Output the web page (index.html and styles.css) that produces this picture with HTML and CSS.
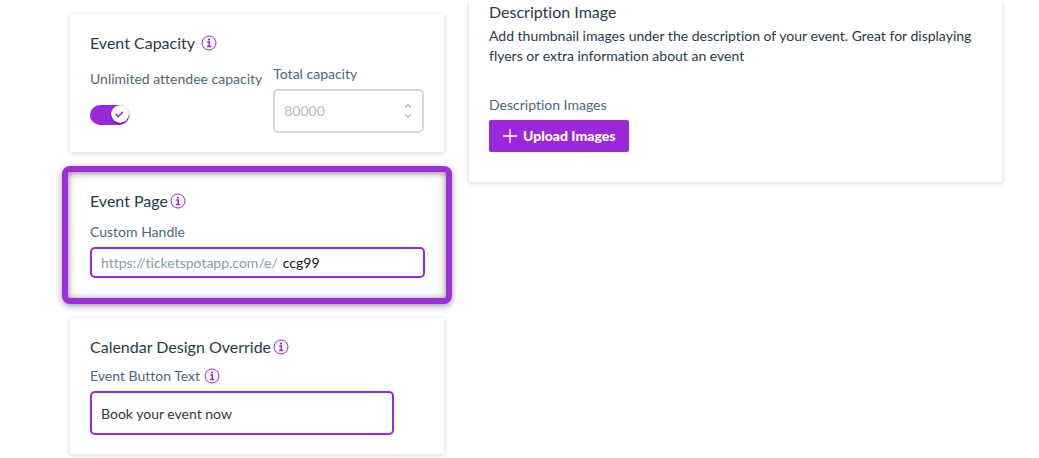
FILE: index.html
```html
<!DOCTYPE html>
<html lang="en">
<head>
  <meta charset="UTF-8" />
  <meta name="viewport" content="width=device-width, initial-scale=1.0" />
  <title>Event settings</title>
  <link rel="stylesheet" href="styles.css">
</head>
<body>
  <svg class="sprite" aria-hidden="true">
    <symbol id="icon-info" viewBox="0 0 16 16">
      <circle cx="8" cy="8" r="7" fill="none" stroke="currentColor" />
      <circle cx="8" cy="4.6" r="1.1" fill="currentColor" />
      <path d="M6.2 7.1H8.3V11.2M6 11.4H10.2" fill="none" stroke="currentColor" stroke-width="1.5" />
    </symbol>
  </svg>

  <main class="page">
    <div class="column">
      <section class="card capacity">
        <h2>Event Capacity <svg class="info spaced"><use href="#icon-info" /></svg></h2>
        <div class="capacity-row">
          <div class="unlimited">
            <label for="unlimited">Unlimited attendee capacity</label>
            <span class="switch">
              <input type="checkbox" id="unlimited" checked />
              <svg class="knob" viewBox="0 0 18 18">
                <circle cx="9" cy="9" r="9" fill="#fff" />
                <path d="M4.5 9L7.2 11.7L12 6.8" fill="none" stroke="#9a27d9" stroke-width="1.6" />
              </svg>
            </span>
          </div>
          <div class="field total">
            <label for="total">Total capacity</label>
            <div class="number-box">
              <input type="text" inputmode="numeric" id="total" value="80000" disabled />
              <svg class="stepper" viewBox="0 0 8 16">
                <path d="M1 4.5L4 1.5L7 4.5M1 11.5L4 14.5L7 11.5" fill="none" stroke="currentColor" stroke-width="1.2" />
              </svg>
            </div>
          </div>
        </div>
      </section>

      <section class="card highlight">
        <h2>Event Page<svg class="info"><use href="#icon-info" /></svg></h2>
        <div class="field">
          <label for="handle">Custom Handle</label>
          <div class="handle-box">
            <span>https://ticketspotapp.com/e/</span>
            <input type="text" id="handle" value="ccg99" />
          </div>
        </div>
      </section>

      <section class="card design">
        <h2>Calendar Design Override<svg class="info"><use href="#icon-info" /></svg></h2>
        <div class="field">
          <label for="button-text">Event Button Text <svg class="info"><use href="#icon-info" /></svg></label>
          <input type="text" class="text-box" id="button-text" value="Book your event now" />
        </div>
      </section>
    </div>

    <section class="card images">
      <h2>Description Image</h2>
      <p>Add thumbnail images under the description of your event. Great for displaying flyers or extra information about an event</p>
      <div class="field">
        <span class="label" id="images-label">Description Images</span>
        <button type="button" class="upload" aria-describedby="images-label">
          <svg class="plus" viewBox="0 0 14 14"><path d="M7 0V14M0 7H14" stroke="currentColor" stroke-width="1.3" /></svg>
          Upload Images
        </button>
      </div>
    </section>
  </main>
</body>
</html>
```

FILE: styles.css
```css
* {
  box-sizing: border-box;
}

body {
  margin: 0;
  background-color: #fff;
  color: #263b4a;
  font-family: Lato, sans-serif;
  font-size: 14px;
  font-variant-ligatures: none;
  line-height: 20px;
}

input,
button {
  font: inherit;
  color: inherit;
}

.sprite {
  position: absolute;
  width: 0;
  height: 0;
}

.page {
  display: grid;
  grid-template-columns: 374fr 533fr;
  column-gap: 25px;
  align-items: start;
  padding: 0 37px 0 70px;
}

.column {
  display: flex;
  flex-direction: column;
  gap: 14px;
  min-width: 0;
  padding: 14px 0 3px;
}

.card {
  padding: 19px 20px;
  background-color: #fff;
  box-shadow: 0 1px 5px rgba(0, 0, 0, 0.18);
}

h2 {
  display: flex;
  align-items: center;
  margin: 0 0 11px;
  font-size: 16px;
  font-weight: 400;
}

.info {
  flex: none;
  width: 16px;
  height: 16px;
  margin-left: 2px;
  color: #9a27d9;
}

.info.spaced {
  margin-left: 6px;
}

label,
.label {
  display: flex;
  align-items: center;
  color: #4b677b;
}

.field {
  display: flex;
  flex-direction: column;
  align-items: flex-start;
  gap: 5px;
}

.capacity-row {
  display: flex;
  gap: 11px;
}

.unlimited {
  display: flex;
  flex-direction: column;
  gap: 16px;
  padding-top: 5px;
  white-space: nowrap;
}

.switch {
  position: relative;
  width: 39px;
  height: 20px;
}

.switch input {
  display: block;
  width: 100%;
  height: 100%;
  margin: 0;
  border-radius: 10px;
  background-color: #9a27d9;
  appearance: none;
}

.knob {
  position: absolute;
  top: 0;
  right: 0;
  width: 18px;
  height: 18px;
  border-radius: 50%;
  box-shadow: 0 1px 2px rgba(40, 0, 70, 0.6);
  pointer-events: none;
}

.total {
  flex: 1;
  min-width: 0;
}

.number-box {
  display: flex;
  align-items: center;
  width: 100%;
  height: 44px;
  padding: 0 10px 0 9px;
  border: 2px solid #d2d8dd;
  border-radius: 5px;
  color: #b5bbc0;
}

.number-box input,
.handle-box input {
  flex: 1;
  min-width: 0;
  padding: 0;
  border: none;
  outline: none;
  background: none;
}

.stepper {
  width: 8px;
  height: 16px;
}

/* ring sits just outside the column edges */
.highlight {
  margin: 0 -8px;
  padding: 19px 21px 20px 22px;
  border: 6px solid #9d2fdb;
  border-radius: 8px;
  box-shadow: 0 2px 6px rgba(0, 0, 0, 0.4), inset 0 1px 7px rgba(0, 0, 0, 0.5);
}

.handle-box {
  display: flex;
  align-items: center;
  gap: 5px;
  width: 100%;
  height: 31px;
  padding: 0 9px;
  border: 2px solid #9a27d9;
  border-radius: 5px;
}

.handle-box span {
  color: #8799a8;
}

.handle-box input {
  color: #111;
}

.design h2 {
  margin-bottom: 9px;
}

.design label {
  gap: 2px;
}

.text-box {
  width: 91%;
  height: 44px;
  padding: 0 9px;
  border: 2px solid #9a27d9;
  border-radius: 5px;
  outline: none;
}

.images {
  padding: 2px 20px 30px;
}

.images h2 {
  margin-bottom: 4px;
}

.images p {
  margin: 0 0 29px;
}

.upload {
  display: flex;
  align-items: center;
  gap: 6px;
  height: 32px;
  padding: 0 14px;
  border: none;
  border-radius: 2px;
  background-color: #9a27d9;
  color: #fff;
  font-weight: 900;
}

.plus {
  width: 14px;
  height: 14px;
}
```
